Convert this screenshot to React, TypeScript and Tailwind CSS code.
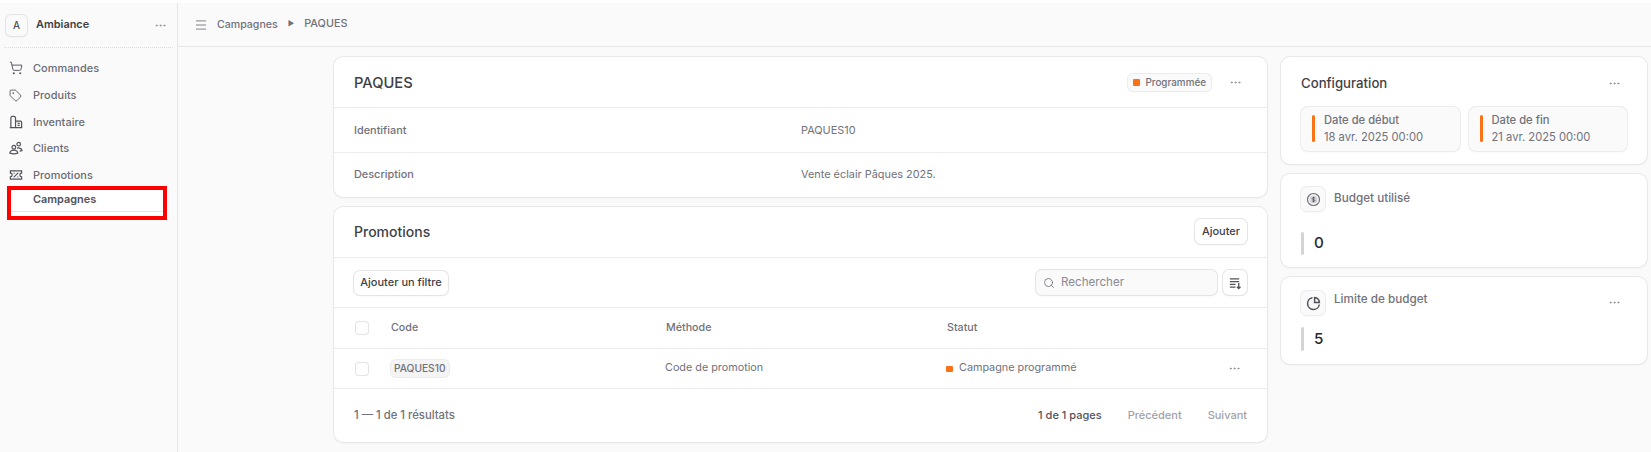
import { Ellipsis, Menu, Search, ShoppingCart, Tag } from "lucide-react";
import type { ReactNode } from "react";

const cardShadow = "rounded-[9px] bg-white shadow-[0_0_0_1px_#e8e8ea,0_1px_2px_#00000014]";

function PromoIcon() {
  return (
    <svg width="14" height="14" viewBox="0 0 15 15" fill="none" stroke="#52525b" strokeWidth="1.3">
      <path d="M1.5 3h12v2.6a1.9 1.9 0 0 0 0 3.8V12h-12V9.4a1.9 1.9 0 0 0 0-3.8z" />
      <path d="M5.5 9.5l4-4M5.5 5.5h.01M9.5 9.5h.01" strokeLinecap="round" />
    </svg>
  );
}

function InventoryIcon() {
  return (
    <svg width="14" height="14" viewBox="0 0 15 15" fill="none" stroke="#52525b" strokeWidth="1.3">
      <path d="M2 13.5V3.2c0-1 .7-1.7 1.7-1.7h1.6c1 0 1.7.7 1.7 1.7v10.3" />
      <path d="M7 6.5h5.3c.7 0 1.2.5 1.2 1.2v5.8" />
      <path d="M.8 13.5h13.4M9.2 9h2.3M9.2 11.2h2.3" />
    </svg>
  );
}

function CustomersIcon() {
  return (
    <svg width="14" height="14" viewBox="0 0 15 15" fill="none" stroke="#52525b" strokeWidth="1.3">
      <circle cx="5.2" cy="6.6" r="2" />
      <circle cx="10.4" cy="3.4" r="1.9" />
      <path d="M1 13c.2-2 2-3.2 4.2-3.2s4 1.2 4.2 3.2c-2.6 1-5.8 1-8.4 0z" />
      <path d="M8.6 7.6c2.6-.6 5 .5 5.4 2.6-.7.4-1.6.6-2.6.7" />
    </svg>
  );
}

function DollarIcon() {
  return (
    <svg width="15" height="15" viewBox="0 0 15 15" fill="none">
      <circle cx="7.5" cy="7.5" r="6" stroke="#71717a" strokeWidth="1.2" />
      <circle cx="7.5" cy="7.5" r="3.9" fill="#d4d4d8" />
      <path d="M7.5 4.8v5.4M9 6.2c-.5-.7-2.8-.8-2.8.4 0 1.3 2.8.6 2.8 1.9 0 1.2-2.4 1.1-2.9.3" stroke="#52525b" strokeWidth=".8" />
    </svg>
  );
}

function PieIcon() {
  return (
    <svg width="15" height="15" viewBox="0 0 15 15" fill="none" stroke="#52525b" strokeWidth="1.5">
      <path d="M13.3 8.5a5.9 5.9 0 1 1-6.8-6.8" />
      <path d="M8.6 1.6a5.4 5.4 0 0 1 4.8 4.8H8.6z" />
    </svg>
  );
}

function SortIcon() {
  return (
    <svg width="14" height="14" viewBox="0 0 15 15" fill="none" stroke="#52525b" strokeWidth="1.4">
      <path d="M2 3h10M2 6h10M2 9h6M2 12h6" />
      <path d="M11.5 7.5v6M9.6 11.6l1.9 1.9 1.9-1.9" />
    </svg>
  );
}

function NavItem({ icon, label }: { icon: ReactNode; label: string }) {
  return (
    <div className="flex h-[26.7px] items-center pl-[9px] text-[10.9px] font-medium tracking-[0.005em] text-[#6b6b73]">
      <span className="flex w-[24px] shrink-0 items-center">{icon}</span>
      {label}
    </div>
  );
}

function Row({ label, value, last }: { label: string; value: string; last?: boolean }) {
  return (
    <div className={`flex items-center px-[20px] text-[10.9px] text-[#71717a] ${last ? "h-[44px] pb-[2px]" : "h-[45px] border-b border-[#ececee]"}`}>
      <span className="w-[447px] font-medium">{label}</span>
      <span>{value}</span>
    </div>
  );
}

function DateBox({ label, value }: { label: string; value: string }) {
  return (
    <div className="flex h-[44px] flex-1 items-center gap-[9px] rounded-[7px] bg-[#fafafa] pl-[11px] shadow-[0_0_0_1px_#ececee,0_1px_2px_#00000010]">
      <div className="h-[27px] w-[3px] rounded-full bg-[#f97316]" />
      <div className="text-[11.2px] leading-[17px] text-[#71717a]">
        <div className="font-medium">{label}</div>
        <div>{value}</div>
      </div>
    </div>
  );
}

function IconBox({ children }: { children: ReactNode }) {
  return (
    <div className="flex h-[24px] w-[24px] items-center justify-center rounded-[6px] bg-[#fafafa] shadow-[0_0_0_1px_#ececee,0_1px_2px_#00000014]">
      {children}
    </div>
  );
}

function Checkbox() {
  return <div className="h-[12px] w-[12px] rounded-[3px] bg-white shadow-[0_0_0_1px_#e4e4e7,0_1px_1px_#00000014]" />;
}

function Dots({ className }: { className: string }) {
  return <Ellipsis size={13} strokeWidth={1.7} className={`text-[#8a8a93] ${className}`} />;
}

export default function App() {
  return (
    <div className="flex h-[452px] w-[1651px] flex-col overflow-hidden bg-[#fafafa] font-['Inter',sans-serif]">
      <div className="h-[3px] shrink-0 bg-white" />
      <div className="flex min-h-0 flex-1">
        <aside className="flex w-[178px] shrink-0 flex-col border-r border-[#e7e7e9]">
          <div className="mx-[4px] flex h-[45px] items-center border-b border-dotted border-[#dcdcdf] pl-[2px] pr-[6px]">
            <div className="mt-[1px] flex h-[21px] w-[21px] items-center justify-center rounded-[5px] bg-[#fafafa] text-[10px] font-medium text-[#52525b] shadow-[0_0_0_1px_#e4e4e7,0_1px_2px_#00000014]">
              A
            </div>
            <span className="ml-[9px] mb-[1px] flex-1 text-[10.9px] font-semibold text-[#3f3f46]">Ambiance</span>
            <Dots className="" />
          </div>
          <div className="mt-[7px] flex flex-col">
            <NavItem icon={<ShoppingCart size={14} strokeWidth={1.6} color="#52525b" />} label="Commandes" />
            <NavItem icon={<Tag size={13} strokeWidth={1.6} color="#52525b" />} label="Produits" />
            <NavItem icon={<InventoryIcon />} label="Inventaire" />
            <NavItem icon={<CustomersIcon />} label="Clients" />
            <NavItem icon={<PromoIcon />} label="Promotions" />
          </div>
          <div className="ml-[7px] -mt-[2px] h-[34px] w-[160px] border-4 border-[#ff0000] bg-white">
            <div className="h-[22px] border-b border-[#e4e4e7] pl-[22px] pt-[2px] text-[10.9px] font-semibold leading-[15px] text-[#52525b]">
              Campagnes
            </div>
          </div>
        </aside>

        <div className="flex min-w-0 flex-1 flex-col">
          <div className="flex h-[44px] items-center border-b border-[#e7e7e9] pl-[16px] text-[10.6px] font-medium text-[#71717a]">
            <Menu size={14} strokeWidth={1.5} className="mr-[9px]" />
            <span>Campagnes</span>
            <span className="mx-[10px] text-[7px]">▶</span>
            <span className="text-[10.8px]">PAQUES</span>
          </div>

          <div className="flex gap-[14px] pl-[156px] pt-[10px]">
            <div className="flex w-[933px] flex-col gap-[10px]">
              <div className={cardShadow}>
                <div className="flex h-[51px] items-center border-b border-[#ececee] pl-[20px] pr-[25px]">
                  <span className="flex-1 pt-[2px] text-[14.7px] font-medium text-[#3f3f46]">PAQUES</span>
                  <span className="flex h-[17px] items-center gap-[5px] rounded-[5px] bg-[#fafafa] px-[5px] text-[9.9px] font-medium text-[#71717a] shadow-[0_0_0_1px_#ececee]">
                    <span className="h-[7px] w-[7px] rounded-[1px] bg-[#f97316]" />
                    Programmée
                  </span>
                  <Dots className="ml-[18px]" />
                </div>
                <Row label="Identifiant" value="PAQUES10" />
                <Row label="Description" value="Vente éclair Pâques 2025." last />
              </div>

              <div className={cardShadow}>
                <div className="flex h-[51px] items-center justify-between border-b border-[#ececee] pb-[2px] pl-[20px] pr-[20px]">
                  <span className="text-[14px] font-medium text-[#3f3f46]">Promotions</span>
                  <button className="flex h-[25px] w-[52px] items-center justify-center rounded-[6px] bg-white text-[11px] font-medium text-[#3f3f46] shadow-[0_0_0_1px_#e4e4e7,0_1px_2px_#00000014]">
                    Ajouter
                  </button>
                </div>
                <div className="flex h-[50px] items-center border-b border-[#ececee] pl-[20px] pr-[20px]">
                  <button className="flex h-[24px] w-[94px] items-center justify-center rounded-[6px] bg-white text-[11px] font-medium text-[#3f3f46] shadow-[0_0_0_1px_#e4e4e7,0_1px_2px_#00000014]">
                    Ajouter un filtre
                  </button>
                  <div className="ml-auto flex h-[25px] w-[181px] items-center gap-[6px] rounded-[6px] bg-[#fafafa] pl-[7px] text-[11.6px] text-[#8a8a93] shadow-[0_0_0_1px_#e4e4e7,0_1px_2px_#00000014]">
                    <Search size={12} strokeWidth={1.7} color="#71717a" />
                    Rechercher
                  </div>
                  <button className="ml-[6px] flex h-[25px] w-[24px] items-center justify-center rounded-[6px] bg-white shadow-[0_0_0_1px_#e4e4e7,0_1px_2px_#00000014]">
                    <SortIcon />
                  </button>
                </div>
                <div className="flex h-[41px] items-center border-b border-[#ececee] pl-[22px] text-[10.7px] font-medium text-[#71717a]">
                  <Checkbox />
                  <span className="ml-[23px] w-[275px]">Code</span>
                  <span className="w-[281px]">Méthode</span>
                  <span>Statut</span>
                </div>
                <div className="flex h-[40px] items-center border-b border-[#ececee] pl-[22px] pr-[26px] text-[10.8px] text-[#71717a]">
                  <Checkbox />
                  <span className="ml-[23px] flex w-[274px]">
                    <span className="rounded-[5px] bg-[#f4f4f5] px-[3px] py-[1px] text-[10.2px] font-medium shadow-[0_0_0_1px_#ececee]">PAQUES10</span>
                  </span>
                  <span className="w-[281px]">Code de promotion</span>
                  <span className="h-[6px] w-[7px] rounded-[1px] bg-[#f97316]" />
                  <span className="ml-[6px] flex-1">Campagne programmé</span>
                  <Dots className="" />
                </div>
                <div className="flex h-[53px] items-center pl-[20px] pr-[20px] text-[11px] font-medium">
                  <span className="flex-1 text-[11.3px] text-[#71717a]">1 — 1 de 1 résultats</span>
                  <span className="text-[#52525b]">1 de 1 pages</span>
                  <span className="ml-[26px] text-[#a1a1aa]">Précédent</span>
                  <span className="ml-[26px] text-[#a1a1aa]">Suivant</span>
                </div>
              </div>
            </div>

            <div className="flex w-[366px] flex-col gap-[10px]">
              <div className={`${cardShadow} h-[107px] px-[20px] pt-[17px]`}>
                <div className="flex items-center justify-between pr-[6px]">
                  <span className="text-[13.2px] font-medium text-[#3f3f46]">Configuration</span>
                  <Dots className="" />
                </div>
                <div className="mt-[13px] flex gap-[9px]">
                  <DateBox label="Date de début" value="18 avr. 2025 00:00" />
                  <DateBox label="Date de fin" value="21 avr. 2025 00:00" />
                </div>
              </div>

              <div className={`${cardShadow} h-[93px] px-[20px] pt-[13px]`}>
                <div className="flex items-center gap-[9px]">
                  <IconBox><DollarIcon /></IconBox>
                  <span className="text-[11.7px] font-medium text-[#71717a]">Budget utilisé</span>
                </div>
                <div className="mt-[21px] flex h-[23px] items-center gap-[10px]">
                  <div className="h-full w-[3px] rounded-full bg-[#d4d4d8]" />
                  <span className="text-[15.2px] font-medium text-[#27272a]">0</span>
                </div>
              </div>

              <div className={`${cardShadow} h-[87px] px-[20px] pt-[14px]`}>
                <div className="flex items-start">
                  <IconBox><PieIcon /></IconBox>
                  <span className="ml-[9px] flex-1 text-[11.7px] font-medium leading-[17px] text-[#71717a]">Limite de budget</span>
                  <Dots className="mr-[6px] mt-[5px]" />
                </div>
                <div className="mt-[12px] flex h-[24px] items-center gap-[10px]">
                  <div className="h-full w-[3px] rounded-full bg-[#d4d4d8]" />
                  <span className="text-[15.2px] font-medium text-[#27272a]">5</span>
                </div>
              </div>
            </div>
          </div>
        </div>
      </div>
    </div>
  );
}
